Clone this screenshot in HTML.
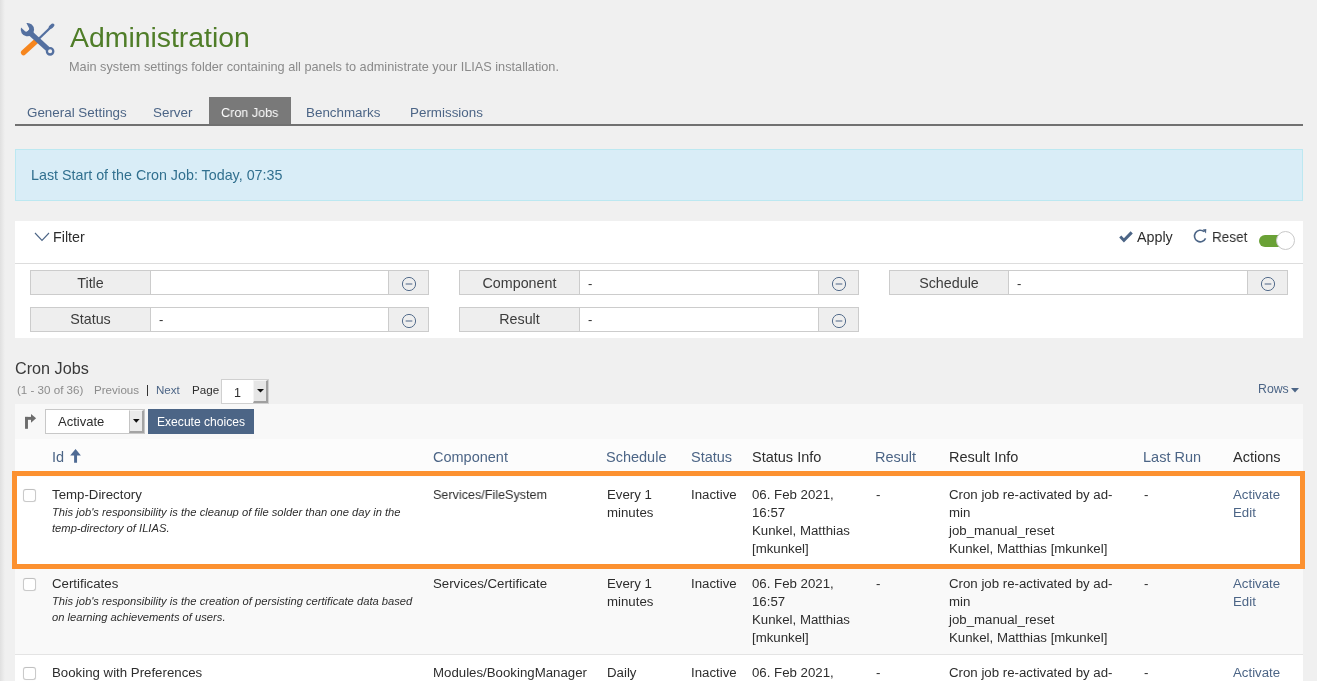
<!DOCTYPE html>
<html><head><meta charset="utf-8"><title>Cron Jobs</title>
<style>
html,body{margin:0;padding:0;}
body{width:1317px;height:681px;overflow:hidden;position:relative;background:#f0f0f0;font-family:"Liberation Sans",sans-serif;}
.t{position:absolute;white-space:nowrap;will-change:transform;}
.r{position:absolute;}
</style></head><body>
<div class="r" style="left:0px;top:0px;width:5px;height:681px;background:linear-gradient(to right,#e0e0e0,#f0f0f0)"></div>
<svg class="r" style="left:15px;top:18px" width="45" height="42" viewBox="0 0 45 42">
<line x1="8.6" y1="34.6" x2="21" y2="23.2" stroke="#f6861f" stroke-width="5.4" stroke-linecap="round"/>
<line x1="22" y1="22.5" x2="34.5" y2="10.5" stroke="#5470a0" stroke-width="2.3"/>
<ellipse cx="36.5" cy="8.4" rx="3.4" ry="1.9" transform="rotate(-42 36.5 8.4)" fill="#5470a0"/>
<line x1="13" y1="13" x2="33.2" y2="31.4" stroke="#5470a0" stroke-width="5.2"/>
<circle cx="35.1" cy="33.3" r="3.2" fill="none" stroke="#5470a0" stroke-width="2.3"/>
<path d="M11.4 5.0 A6.7 6.7 0 1 1 6.0 9.6 L9.0 12.3 A2.7 2.7 0 0 0 13.6 9.3 Z" fill="#5470a0"/>
</svg>
<div class="t" style="left:70.00px;top:23.00px;font-size:28.4px;line-height:28.4px;color:#4f7d28;">Administration</div>
<div class="t" style="left:69.00px;top:61.00px;font-size:12.73px;line-height:12.73px;color:#8a8a8a;">Main system settings folder containing all panels to administrate your ILIAS installation.</div>
<div class="r" style="left:209px;top:97px;width:82px;height:28px;background:#797979"></div>
<div class="r" style="left:15px;top:124px;width:1288px;height:2px;background:#717171"></div>
<div class="t" style="left:26.50px;top:106.00px;font-size:13.4px;line-height:13.4px;color:#4c6586;">General Settings</div>
<div class="t" style="left:153.40px;top:106.00px;font-size:13.4px;line-height:13.4px;color:#4c6586;">Server</div>
<div class="t" style="left:221.00px;top:106.00px;font-size:13.4px;line-height:13.4px;color:#fff;;transform:scaleX(0.94);transform-origin:0 0">Cron Jobs</div>
<div class="t" style="left:306.00px;top:106.00px;font-size:13.4px;line-height:13.4px;color:#4c6586;">Benchmarks</div>
<div class="t" style="left:409.70px;top:106.00px;font-size:13.4px;line-height:13.4px;color:#4c6586;">Permissions</div>
<div class="r" style="left:15px;top:149px;width:1288px;height:52px;background:#d9edf7;border:1px solid #bce8f1;box-sizing:border-box"></div>
<div class="t" style="left:30.50px;top:168.00px;font-size:14.3px;line-height:14.3px;color:#31708f;">Last Start of the Cron Job: Today, 07:35</div>
<div class="r" style="left:15px;top:221px;width:1288px;height:117px;background:#fff"></div>
<div class="r" style="left:15px;top:263px;width:1288px;height:1px;background:#dddddd"></div>
<svg class="r" style="left:34px;top:232px" width="16" height="10" viewBox="0 0 16 10"><polyline points="1,1 8,8.5 15,1" fill="none" stroke="#4c6586" stroke-width="1.1"/></svg>
<div class="t" style="left:53.00px;top:230.00px;font-size:14.3px;line-height:14.3px;color:#2d2d2d;">Filter</div>
<svg class="r" style="left:1118px;top:230px" width="16" height="14" viewBox="0 0 16 14"><path d="M1.2 7.6 L3.3 5.6 L5.9 8.3 L12.6 1.3 L14.8 3.4 L5.9 12.6 Z" fill="#4c6586"/></svg>
<div class="t" style="left:1136.50px;top:230.00px;font-size:14.3px;line-height:14.3px;color:#2d2d2d;">Apply</div>
<svg class="r" style="left:1190px;top:226px" width="20" height="20" viewBox="0 0 20 20"><path d="M14.0 5.56 A5.8 5.8 0 1 0 15.56 12.45" fill="none" stroke="#4c6586" stroke-width="1.6"/><path d="M12.6 3.5 L16.3 3.0 L16.0 7.6 Z" fill="#4c6586"/></svg>
<div class="t" style="left:1211.50px;top:230.00px;font-size:14.3px;line-height:14.3px;color:#2d2d2d;;transform:scaleX(0.945);transform-origin:0 0">Reset</div>
<div class="r" style="left:1259px;top:234.5px;width:30px;height:12px;background:#6aa136;border-radius:6px"></div>
<div class="r" style="left:1275.5px;top:230.9px;width:19px;height:19px;border-radius:50%;background:#fff;border:1px solid #c9c9c9;box-sizing:border-box"></div>
<div class="r" style="left:30px;top:270px;width:121px;height:25px;background:#eeeeee;border:1px solid #cccccc;box-sizing:border-box"></div>
<div class="r" style="left:150px;top:270px;width:239px;height:25px;background:#fff;border:1px solid #cccccc;box-sizing:border-box"></div>
<div class="r" style="left:388px;top:270px;width:41px;height:25px;background:#eeeeee;border:1px solid #cccccc;box-sizing:border-box"></div>
<div class="t" style="left:30.00px;top:276.00px;font-size:14.3px;line-height:14.3px;color:#3c3c3c;text-align:center;width:121px">Title</div>
<svg class="r" style="left:400.5px;top:275.8px" width="16" height="16" viewBox="0 0 16 16"><circle cx="8" cy="8" r="6.6" fill="none" stroke="#4c6586" stroke-width="0.95"/><line x1="4.7" y1="8" x2="11.3" y2="8" stroke="#4c6586" stroke-width="1"/></svg>
<div class="r" style="left:459px;top:270px;width:121px;height:25px;background:#eeeeee;border:1px solid #cccccc;box-sizing:border-box"></div>
<div class="r" style="left:579px;top:270px;width:240px;height:25px;background:#fff;border:1px solid #cccccc;box-sizing:border-box"></div>
<div class="r" style="left:818px;top:270px;width:41px;height:25px;background:#eeeeee;border:1px solid #cccccc;box-sizing:border-box"></div>
<div class="t" style="left:459.00px;top:276.00px;font-size:14.3px;line-height:14.3px;color:#3c3c3c;text-align:center;width:121px">Component</div>
<div class="t" style="left:588.00px;top:277.00px;font-size:13px;line-height:13px;color:#2d2d2d;">-</div>
<svg class="r" style="left:830.5px;top:275.8px" width="16" height="16" viewBox="0 0 16 16"><circle cx="8" cy="8" r="6.6" fill="none" stroke="#4c6586" stroke-width="0.95"/><line x1="4.7" y1="8" x2="11.3" y2="8" stroke="#4c6586" stroke-width="1"/></svg>
<div class="r" style="left:889px;top:270px;width:120px;height:25px;background:#eeeeee;border:1px solid #cccccc;box-sizing:border-box"></div>
<div class="r" style="left:1008px;top:270px;width:240px;height:25px;background:#fff;border:1px solid #cccccc;box-sizing:border-box"></div>
<div class="r" style="left:1247px;top:270px;width:41px;height:25px;background:#eeeeee;border:1px solid #cccccc;box-sizing:border-box"></div>
<div class="t" style="left:889.00px;top:276.00px;font-size:14.3px;line-height:14.3px;color:#3c3c3c;text-align:center;width:120px">Schedule</div>
<div class="t" style="left:1017.00px;top:277.00px;font-size:13px;line-height:13px;color:#2d2d2d;">-</div>
<svg class="r" style="left:1259.5px;top:275.8px" width="16" height="16" viewBox="0 0 16 16"><circle cx="8" cy="8" r="6.6" fill="none" stroke="#4c6586" stroke-width="0.95"/><line x1="4.7" y1="8" x2="11.3" y2="8" stroke="#4c6586" stroke-width="1"/></svg>
<div class="r" style="left:30px;top:307px;width:121px;height:25px;background:#eeeeee;border:1px solid #cccccc;box-sizing:border-box"></div>
<div class="r" style="left:150px;top:307px;width:239px;height:25px;background:#fff;border:1px solid #cccccc;box-sizing:border-box"></div>
<div class="r" style="left:388px;top:307px;width:41px;height:25px;background:#eeeeee;border:1px solid #cccccc;box-sizing:border-box"></div>
<div class="t" style="left:30.00px;top:312.00px;font-size:14.3px;line-height:14.3px;color:#3c3c3c;text-align:center;width:121px">Status</div>
<div class="t" style="left:159.00px;top:313.00px;font-size:13px;line-height:13px;color:#2d2d2d;">-</div>
<svg class="r" style="left:400.5px;top:312.8px" width="16" height="16" viewBox="0 0 16 16"><circle cx="8" cy="8" r="6.6" fill="none" stroke="#4c6586" stroke-width="0.95"/><line x1="4.7" y1="8" x2="11.3" y2="8" stroke="#4c6586" stroke-width="1"/></svg>
<div class="r" style="left:459px;top:307px;width:121px;height:25px;background:#eeeeee;border:1px solid #cccccc;box-sizing:border-box"></div>
<div class="r" style="left:579px;top:307px;width:240px;height:25px;background:#fff;border:1px solid #cccccc;box-sizing:border-box"></div>
<div class="r" style="left:818px;top:307px;width:41px;height:25px;background:#eeeeee;border:1px solid #cccccc;box-sizing:border-box"></div>
<div class="t" style="left:459.00px;top:312.00px;font-size:14.3px;line-height:14.3px;color:#3c3c3c;text-align:center;width:121px">Result</div>
<div class="t" style="left:588.00px;top:313.00px;font-size:13px;line-height:13px;color:#2d2d2d;">-</div>
<svg class="r" style="left:830.5px;top:312.8px" width="16" height="16" viewBox="0 0 16 16"><circle cx="8" cy="8" r="6.6" fill="none" stroke="#4c6586" stroke-width="0.95"/><line x1="4.7" y1="8" x2="11.3" y2="8" stroke="#4c6586" stroke-width="1"/></svg>
<div class="t" style="left:15.00px;top:360.00px;font-size:16.2px;line-height:16.2px;color:#3a3a3a;">Cron Jobs</div>
<div class="t" style="left:17.30px;top:384.00px;font-size:11.6px;line-height:11.6px;color:#8c8c8c;">(1 - 30 of 36)</div>
<div class="t" style="left:94.00px;top:384.00px;font-size:11.6px;line-height:11.6px;color:#8c8c8c;">Previous</div>
<div class="r" style="left:147px;top:385px;width:1px;height:11px;background:#333"></div>
<div class="t" style="left:156.00px;top:384.00px;font-size:11.6px;line-height:11.6px;color:#4c6586;">Next</div>
<div class="t" style="left:192.00px;top:384.00px;font-size:11.6px;line-height:11.6px;color:#2d2d2d;">Page</div>
<div class="r" style="left:221px;top:379px;width:48px;height:25px;background:#fff;border:1px solid #d0d0d0;box-sizing:border-box"></div>
<div class="r" style="left:253px;top:380px;width:15px;height:23px;background:#e6e6e6;border-top:1px solid #f4f4f4;border-left:1px solid #f4f4f4;border-right:2px solid #a0a0a0;border-bottom:2px solid #a0a0a0;box-sizing:border-box"></div>
<svg class="r" style="left:257px;top:388.5px" width="7" height="4"><path d="M0 0 L7 0 L3.5 3.6 Z" fill="#111"/></svg>
<div class="t" style="left:234.00px;top:387.00px;font-size:12.5px;line-height:12.5px;color:#2d2d2d;">1</div>
<div class="t" style="left:1258.00px;top:383.00px;font-size:12.3px;line-height:12.3px;color:#4c6586;">Rows</div>
<svg class="r" style="left:1291px;top:387.5px" width="8" height="5"><path d="M0 0 L8 0 L4 4.5 Z" fill="#4c6586"/></svg>
<div class="r" style="left:15px;top:404px;width:1288px;height:35px;background:#f8f8f8"></div>
<svg class="r" style="left:18px;top:405px" width="30" height="30" viewBox="0 0 30 30"><rect x="7.05" y="11.9" width="2.9" height="11.9" fill="#6c6c6c"/><rect x="7.05" y="11.9" width="6.5" height="2.9" fill="#6c6c6c"/><path d="M13 9 L18.1 13.35 L13 17.7 Z" fill="#6c6c6c"/></svg>
<div class="r" style="left:45px;top:409px;width:100px;height:25px;background:#fff;border:1px solid #c8c8c8;box-sizing:border-box"></div>
<div class="r" style="left:129px;top:410px;width:15px;height:23px;background:#ebebeb;border-top:1px solid #f6f6f6;border-left:1px solid #c4c4c4;border-right:2px solid #a4a4a4;border-bottom:2px solid #a4a4a4;box-sizing:border-box"></div>
<svg class="r" style="left:133.3px;top:419.2px" width="7" height="4"><path d="M0 0 L6.6 0 L3.3 3.8 Z" fill="#111"/></svg>
<div class="t" style="left:57.50px;top:415.00px;font-size:13px;line-height:13px;color:#2d2d2d;">Activate</div>
<div class="r" style="left:148px;top:409px;width:106px;height:25px;background:#4c6586"></div>
<div class="t" style="left:157.00px;top:416.00px;font-size:12.1px;line-height:12.1px;color:#fff;">Execute choices</div>
<div class="r" style="left:15px;top:439px;width:1288px;height:38px;background:#fcfcfc"></div>
<div class="t" style="left:52.00px;top:450.00px;font-size:14.5px;line-height:14.5px;color:#4c6586;">Id</div>
<svg class="r" style="left:69px;top:448px" width="13" height="16" viewBox="0 0 13 16"><path d="M6.55 1.1 L11.9 7.6 L8.05 7.6 L8.05 14.7 L5.1 14.7 L5.1 7.6 L1.2 7.6 Z" fill="#4f6b94"/></svg>
<div class="t" style="left:432.50px;top:450.00px;font-size:14.5px;line-height:14.5px;color:#4c6586;">Component</div>
<div class="t" style="left:606.00px;top:450.00px;font-size:14.5px;line-height:14.5px;color:#4c6586;">Schedule</div>
<div class="t" style="left:690.80px;top:450.00px;font-size:14.5px;line-height:14.5px;color:#4c6586;">Status</div>
<div class="t" style="left:751.50px;top:450.00px;font-size:14.5px;line-height:14.5px;color:#2d2d2d;">Status Info</div>
<div class="t" style="left:874.80px;top:450.00px;font-size:14.5px;line-height:14.5px;color:#4c6586;">Result</div>
<div class="t" style="left:948.50px;top:450.00px;font-size:14.5px;line-height:14.5px;color:#2d2d2d;">Result Info</div>
<div class="t" style="left:1143.00px;top:450.00px;font-size:14.5px;line-height:14.5px;color:#4c6586;">Last Run</div>
<div class="t" style="left:1233.00px;top:450.00px;font-size:14.5px;line-height:14.5px;color:#2d2d2d;">Actions</div>
<div class="r" style="left:15px;top:477px;width:1288px;height:89px;background:#fff;border-bottom:1px solid #e4e4e4;box-sizing:border-box"></div>
<div class="r" style="left:23.2px;top:489.2px;width:12.6px;height:12.4px;border:1.6px solid #cacaca;border-top-color:#c0c0c0;border-radius:3px;background:#fff;box-sizing:border-box;box-shadow:0 0 1px rgba(0,0,0,.12)"></div>
<div class="t" style="left:52.00px;top:488.00px;font-size:13.25px;line-height:13.25px;color:#2d2d2d;">Temp-Directory</div>
<div class="t" style="left:52.00px;top:504.00px;font-size:11.2px;line-height:16px;color:#2d2d2d;font-style:italic;">This job's responsibility is the cleanup of file solder than one day in the<br>temp-directory of ILIAS.</div>
<div class="t" style="left:432.50px;top:488.00px;font-size:13.25px;line-height:13.25px;color:#2d2d2d;;transform:scaleX(0.95);transform-origin:0 0">Services/FileSystem</div>
<div class="t" style="left:606.50px;top:486.00px;font-size:13.25px;line-height:18px;color:#2d2d2d;">Every 1<br>minutes</div>
<div class="t" style="left:690.80px;top:488.00px;font-size:13.25px;line-height:13.25px;color:#2d2d2d;">Inactive</div>
<div class="t" style="left:752.00px;top:486.00px;font-size:13.25px;line-height:18px;color:#2d2d2d;">06. Feb 2021,<br>16:57<br>Kunkel, Matthias<br>[mkunkel]</div>
<div class="t" style="left:875.50px;top:488.00px;font-size:13.25px;line-height:13.25px;color:#2d2d2d;">-</div>
<div class="t" style="left:949.00px;top:486.00px;font-size:13.25px;line-height:18px;color:#2d2d2d;">Cron job re-activated by ad-<br>min<br>job_manual_reset<br>Kunkel, Matthias [mkunkel]</div>
<div class="t" style="left:1143.50px;top:488.00px;font-size:13.25px;line-height:13.25px;color:#2d2d2d;">-</div>
<div class="t" style="left:1233.00px;top:486.00px;font-size:13.25px;line-height:18px;color:#4c6586;">Activate<br>Edit</div>
<div class="r" style="left:15px;top:566px;width:1288px;height:89px;background:#f9f9f9;border-bottom:1px solid #e4e4e4;box-sizing:border-box"></div>
<div class="r" style="left:23.2px;top:578.3px;width:12.6px;height:12.4px;border:1.6px solid #cacaca;border-top-color:#c0c0c0;border-radius:3px;background:#fff;box-sizing:border-box;box-shadow:0 0 1px rgba(0,0,0,.12)"></div>
<div class="t" style="left:52.00px;top:577.00px;font-size:13.25px;line-height:13.25px;color:#2d2d2d;">Certificates</div>
<div class="t" style="left:52.00px;top:593.00px;font-size:11.2px;line-height:16px;color:#2d2d2d;font-style:italic;">This job's responsibility is the creation of persisting certificate data based<br>on learning achievements of users.</div>
<div class="t" style="left:432.50px;top:577.00px;font-size:13.25px;line-height:13.25px;color:#2d2d2d;">Services/Certificate</div>
<div class="t" style="left:606.50px;top:575.00px;font-size:13.25px;line-height:18px;color:#2d2d2d;">Every 1<br>minutes</div>
<div class="t" style="left:690.80px;top:577.00px;font-size:13.25px;line-height:13.25px;color:#2d2d2d;">Inactive</div>
<div class="t" style="left:752.00px;top:575.00px;font-size:13.25px;line-height:18px;color:#2d2d2d;">06. Feb 2021,<br>16:57<br>Kunkel, Matthias<br>[mkunkel]</div>
<div class="t" style="left:875.50px;top:577.00px;font-size:13.25px;line-height:13.25px;color:#2d2d2d;">-</div>
<div class="t" style="left:949.00px;top:575.00px;font-size:13.25px;line-height:18px;color:#2d2d2d;">Cron job re-activated by ad-<br>min<br>job_manual_reset<br>Kunkel, Matthias [mkunkel]</div>
<div class="t" style="left:1143.50px;top:577.00px;font-size:13.25px;line-height:13.25px;color:#2d2d2d;">-</div>
<div class="t" style="left:1233.00px;top:575.00px;font-size:13.25px;line-height:18px;color:#4c6586;">Activate<br>Edit</div>
<div class="r" style="left:15px;top:655px;width:1288px;height:89px;background:#fff;border-bottom:1px solid #e4e4e4;box-sizing:border-box"></div>
<div class="r" style="left:23.2px;top:667.1999999999999px;width:12.6px;height:12.4px;border:1.6px solid #cacaca;border-top-color:#c0c0c0;border-radius:3px;background:#fff;box-sizing:border-box;box-shadow:0 0 1px rgba(0,0,0,.12)"></div>
<div class="t" style="left:52.00px;top:666.00px;font-size:13.25px;line-height:13.25px;color:#2d2d2d;">Booking with Preferences</div>
<div class="t" style="left:52.00px;top:682.00px;font-size:11.2px;line-height:16px;color:#2d2d2d;font-style:italic;"></div>
<div class="t" style="left:432.50px;top:666.00px;font-size:13.25px;line-height:13.25px;color:#2d2d2d;">Modules/BookingManager</div>
<div class="t" style="left:606.50px;top:664.00px;font-size:13.25px;line-height:18px;color:#2d2d2d;">Daily</div>
<div class="t" style="left:690.80px;top:666.00px;font-size:13.25px;line-height:13.25px;color:#2d2d2d;">Inactive</div>
<div class="t" style="left:752.00px;top:664.00px;font-size:13.25px;line-height:18px;color:#2d2d2d;">06. Feb 2021,<br>16:57<br>Kunkel, Matthias<br>[mkunkel]</div>
<div class="t" style="left:875.50px;top:666.00px;font-size:13.25px;line-height:13.25px;color:#2d2d2d;">-</div>
<div class="t" style="left:949.00px;top:664.00px;font-size:13.25px;line-height:18px;color:#2d2d2d;">Cron job re-activated by ad-<br>min<br>job_manual_reset<br>Kunkel, Matthias [mkunkel]</div>
<div class="t" style="left:1143.50px;top:666.00px;font-size:13.25px;line-height:13.25px;color:#2d2d2d;">-</div>
<div class="t" style="left:1233.00px;top:664.00px;font-size:13.25px;line-height:18px;color:#4c6586;">Activate<br>Edit</div>
<div class="r" style="left:12px;top:471px;width:1293px;height:98px;border:5px solid #fc9130;box-sizing:border-box"></div>
</body></html>
